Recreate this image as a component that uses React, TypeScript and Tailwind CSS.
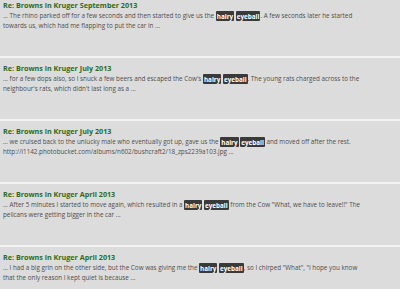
const results = [
  {
    title: "Re: Browns in Kruger September 2013",
    before: "... The rhino parked off for a few seconds and then started to give us the ",
    after: ". A few seconds later he started",
    line2: "towards us, which had me flapping to put the car in ...",
  },
  {
    title: "Re: Browns in Kruger July 2013",
    before: "... for a few dops also, so I snuck a few beers and escaped the Cow's ",
    after: ". The young rats charged across to the",
    line2: "neighbour's rats, which didn't last long as a ...",
  },
  {
    title: "Re: Browns in Kruger July 2013",
    before: "... we cruised back to the unlucky male who eventually got up, gave us the ",
    after: " and moved off after the rest.",
    line2: "http://i1142.photobucket.com/albums/n602/bushcraft2/18_zps2239a103.jpg ...",
  },
  {
    title: "Re: Browns in Kruger April 2013",
    before: "... After 5 minutes I started to move again, which resulted in a ",
    after: " from the Cow \"What, we have to leave!!\" The",
    line2: "pelicans were getting bigger in the car ...",
  },
  {
    title: "Re: Browns in Kruger April 2013",
    before: "... I had a big grin on the other side, but the Cow was giving me the ",
    after: ", so I chirped \"What\", \"I hope you know",
    line2: "that the only reason I kept quiet is because ...",
  },
];

function Hit({ word }: { word: string }) {
  return (
    <span className="bg-[#3a3a3a] text-white font-bold px-[1px] py-[0.5px] rounded-[1px]">
      {word}
    </span>
  );
}

export default function App() {
  return (
    <div
      className="w-[400px] h-[289px] overflow-hidden bg-[#dcdcdc]"
      style={{ fontFamily: "'Open Sans', 'Liberation Sans', sans-serif" }}
    >
      <div className="-mt-[5px]">
        {results.map((r, i) => (
          <div
            key={i}
            className="h-[63px] border-b-2 border-[#f3f3f3] pt-[5px] px-[3px]"
          >
            <div className="text-[7.2px] leading-[10px] font-bold text-[#2e6b20]">
              {r.title}
            </div>
            <div className="mt-[1px] text-[6.3px] leading-[9.5px] text-[#4e4e4e] whitespace-nowrap">
              <div>
                {r.before}
                <Hit word="hairy" /> <Hit word="eyeball" />
                {r.after}
              </div>
              <div>{r.line2}</div>
            </div>
          </div>
        ))}
      </div>
    </div>
  );
}
